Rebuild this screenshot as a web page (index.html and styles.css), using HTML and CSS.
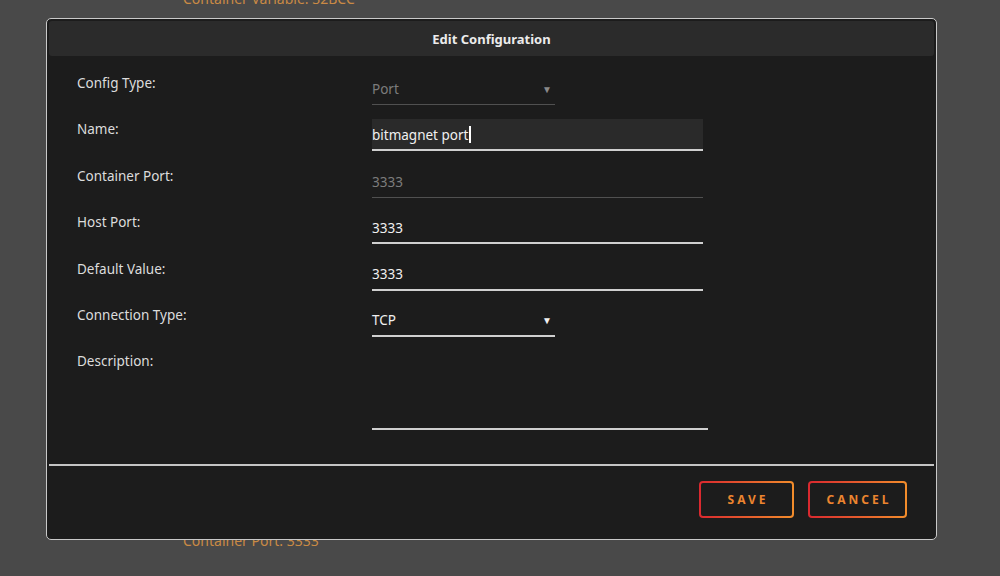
FILE: index.html
```html
<!DOCTYPE html>
<html lang="en">
<head>
  <meta charset="UTF-8">
  <meta name="viewport" content="width=device-width, initial-scale=1.0">
  <title>Edit Configuration</title>
  <link rel="stylesheet" href="styles.css">
</head>
<body>
  <!-- page behind the modal -->
  <div class="page">
    <div class="page-line top">Container Variable: 32BCC</div>
    <div class="page-line bottom">Container Port: 3333</div>
  </div>

  <div class="modal">
    <div class="modal-header">Edit Configuration</div>

    <div class="modal-body">
      <div class="row">
        <div class="label">Config Type:</div>
        <div class="field select muted short">
          <span>Port</span>
          <span class="arrow">&#9660;</span>
        </div>
      </div>
      <div class="row">
        <div class="label">Name:</div>
        <div class="field focused">
          <span>bitmagnet port</span><span class="caret"></span>
        </div>
      </div>
      <div class="row">
        <div class="label">Container Port:</div>
        <div class="field muted">
          <span>3333</span>
        </div>
      </div>
      <div class="row">
        <div class="label">Host Port:</div>
        <div class="field">
          <span>3333</span>
        </div>
      </div>
      <div class="row">
        <div class="label">Default Value:</div>
        <div class="field">
          <span>3333</span>
        </div>
      </div>
      <div class="row">
        <div class="label">Connection Type:</div>
        <div class="field select short">
          <span>TCP</span>
          <span class="arrow">&#9660;</span>
        </div>
      </div>
      <div class="row">
        <div class="label">Description:</div>
        <div class="field textarea"></div>
      </div>
    </div>

    <div class="modal-footer">
      <button class="btn">SAVE</button>
      <button class="btn">CANCEL</button>
    </div>
  </div>
</body>
</html>
```

FILE: styles.css
```css
body {
  margin: 0;
  background-color: #494949;
  font-family: "Noto Sans", "Open Sans", sans-serif;
  font-size: 13.5px;
  color: #e6e6e6;
  height: 576px;
  overflow: hidden;
}
.page {
  display: flex;
  flex-direction: column;
  gap: 524px;
  padding-left: 183px;
  margin-top: -10px;
}
.page-line {
  color: #c98a45;
  font-size: 14px;
  line-height: 18px;
}
.modal {
  position: absolute;
  left: 46px;
  top: 18px;
  width: 885px;
  height: 516px;
  padding: 2px;
  background-color: #1c1c1c;
  border: 1px solid #c9c9c9;
  border-radius: 5px;
  display: flex;
  flex-direction: column;
}
.modal-header {
  height: 35px;
  line-height: 36px;
  background-color: #2b2b2b;
  border-radius: 3px;
  text-align: center;
  font-weight: 700;
  font-size: 13px;
  color: #ececec;
}
.modal-body {
  padding: 17px 0 0 28px;
  display: flex;
  flex-direction: column;
  gap: 14.4px;
}
.row {
  display: flex;
}
.label {
  width: 295px;
  padding-top: 2px;
  line-height: 16px;
  color: #dcdcdc;
}
.field {
  width: 331px;
  height: 29px;
  box-sizing: content-box;
  display: flex;
  align-items: center;
  justify-content: space-between;
  padding-top: 1px;
  border-bottom: 2px solid #cfcfcf;
  color: #f0f0f0;
  font-size: 13.5px;
}
.field.short {
  width: 183px;
}
.field.muted {
  color: #7c7c7c;
  border-bottom: 1px solid #505050;
  height: 30px;
}
.field.focused {
  background-color: #2a2a2a;
  justify-content: flex-start;
}
.caret {
  width: 2px;
  height: 17px;
  background-color: #ffffff;
  margin-left: 1px;
}
.arrow {
  font-size: 10px;
  padding-right: 3px;
  color: #f0f0f0;
}
.muted .arrow {
  color: #8a8a8a;
}
.textarea {
  width: 336px;
  height: 76px;
}
.modal-footer {
  margin-top: auto;
  border-top: 2px solid #c4c4c4;
  height: 73px;
  display: flex;
  justify-content: flex-end;
  align-items: flex-start;
  gap: 14px;
  padding: 15px 27px 0 0;
  box-sizing: border-box;
}
.btn {
  height: 37px;
  padding: 0;
  border: 2px solid transparent;
  border-radius: 4px;
  background: linear-gradient(#1c1c1c, #1c1c1c) padding-box,
              linear-gradient(90deg, #d9282f, #f28d2b) border-box;
  color: #ec852f;
  font-family: "Noto Sans", sans-serif;
  font-weight: 700;
  font-size: 12px;
  letter-spacing: 3px;
  text-indent: 3px;
  cursor: pointer;
}
.btn:first-child {
  width: 95px;
}
.btn:last-child {
  width: 99px;
}
```
